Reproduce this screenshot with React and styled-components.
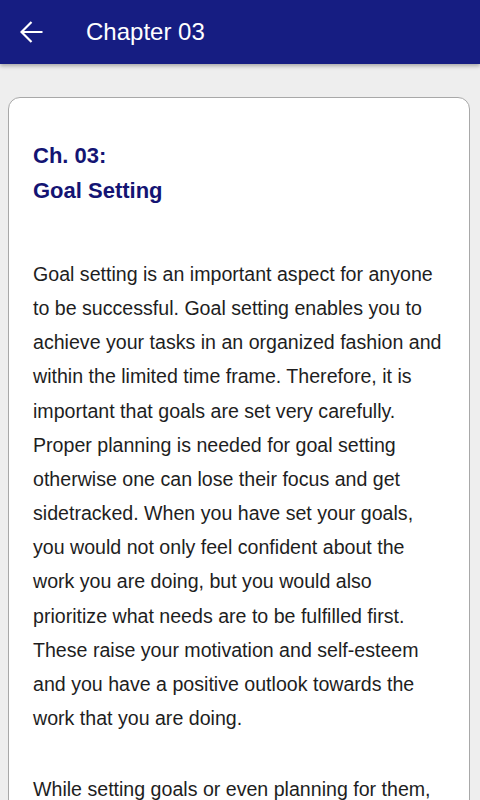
import React from "react";
import styled, { createGlobalStyle } from "styled-components";

const GlobalStyle = createGlobalStyle`
  html, body {
    margin: 0;
    padding: 0;
    background: #eeeeee;
    font-family: "Liberation Sans", Arial, sans-serif;
  }
`;

const Page = styled.div`
  min-height: 800px;
  background: #eeeeee;
`;

const AppBar = styled.header`
  height: 64px;
  background: #161d82;
  display: flex;
  align-items: center;
  padding: 0 16px;
  box-shadow: 0 2px 4px rgba(0, 0, 0, 0.3);
  color: #ffffff;
`;

const BackButton = styled.button`
  width: 32px;
  height: 32px;
  display: flex;
  align-items: center;
  justify-content: center;
  background: transparent;
  border: none;
  padding: 0;
  cursor: pointer;
`;

const Title = styled.h1`
  margin: 0 0 0 38px;
  font-size: 24px;
  font-weight: 400;
  color: #ffffff;
`;

const Content = styled.main`
  padding: 33px 10px 0 8px;
`;

const Card = styled.article`
  background: #ffffff;
  border: 1px solid #a8a8a8;
  border-radius: 12px;
  padding: 40px 24px 24px 24px;
`;

const Heading = styled.h2`
  margin: 0 0 49px;
  font-size: 22px;
  line-height: 35px;
  font-weight: 700;
  color: #141473;
`;

const Paragraph = styled.p`
  margin: 0 0 37px;
  font-size: 19.6px;
  line-height: 34.15px;
  color: #1e1e1e;
`;

const paragraphs = [
  "Goal setting is an important aspect for anyone to be successful. Goal setting enables you to achieve your tasks in an organized fashion and within the limited time frame. Therefore, it is important that goals are set very carefully. Proper planning is needed for goal setting otherwise one can lose their focus and get sidetracked. When you have set your goals, you would not only feel confident about the work you are doing, but you would also prioritize what needs are to be fulfilled first. These raise your motivation and self-esteem and you have a positive outlook towards the work that you are doing.",
  "While setting goals or even planning for them, you should keep in mind that the goals must be realistic and achievable within the time you have set for them.",
];

const ArrowLeft = () => (
  <svg width="24" height="24" viewBox="0 0 24 24" fill="none">
    <path
      d="M22.5 12H2M11.5 2L1.5 12l10 10"
      stroke="#ffffff"
      strokeWidth="2.2"
      strokeLinejoin="miter"
    />
  </svg>
);

const App = () => (
  <Page>
    <GlobalStyle />
    <AppBar>
      <BackButton aria-label="Back">
        <ArrowLeft />
      </BackButton>
      <Title>Chapter 03</Title>
    </AppBar>
    <Content>
      <Card>
        <Heading>
          Ch. 03:
          <br />
          Goal Setting
        </Heading>
        {paragraphs.map((p, i) => (
          <Paragraph key={i}>{p}</Paragraph>
        ))}
      </Card>
    </Content>
  </Page>
);

export default App;
